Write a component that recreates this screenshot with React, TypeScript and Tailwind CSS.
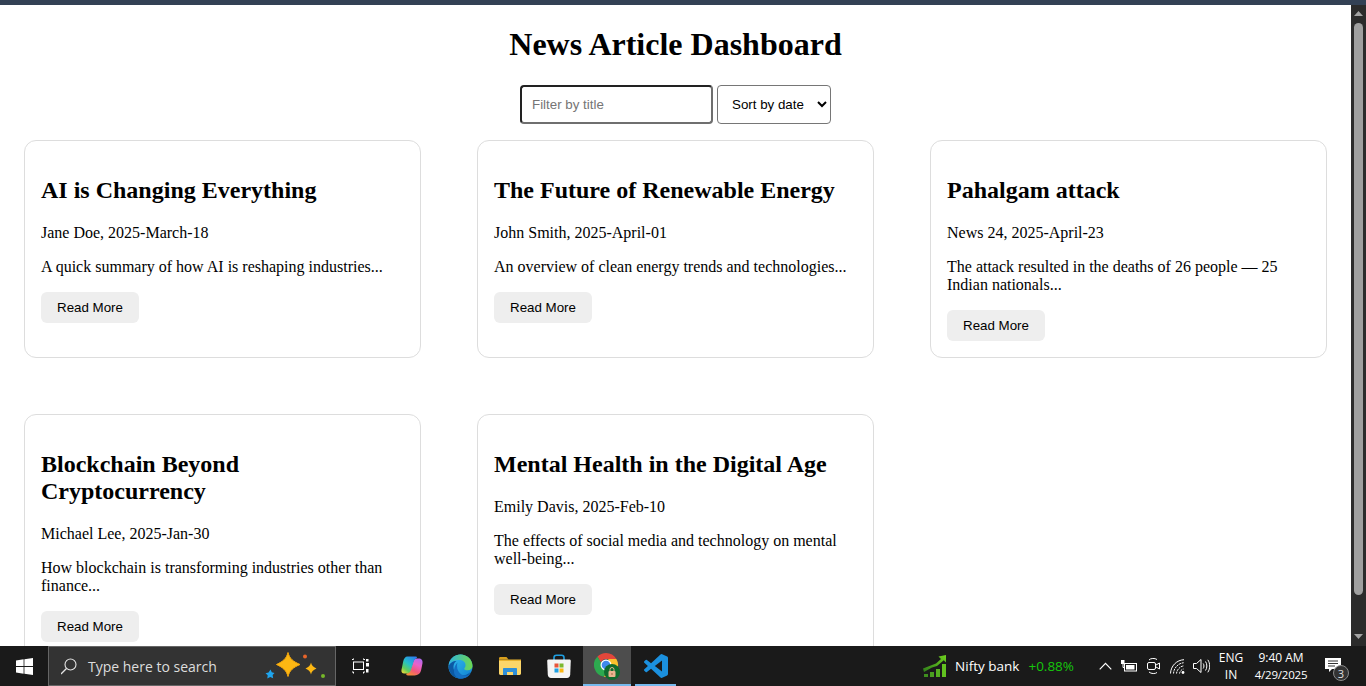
import { ReactNode } from "react";

type Article = { title: string; meta: string; summary: string };

const articles: Article[] = [
  { title: "AI is Changing Everything", meta: "Jane Doe, 2025-March-18", summary: "A quick summary of how AI is reshaping industries..." },
  { title: "The Future of Renewable Energy", meta: "John Smith, 2025-April-01", summary: "An overview of clean energy trends and technologies..." },
  { title: "Pahalgam attack", meta: "News 24, 2025-April-23", summary: "The attack resulted in the deaths of 26 people — 25 Indian nationals..." },
  { title: "Blockchain Beyond Cryptocurrency", meta: "Michael Lee, 2025-Jan-30", summary: "How blockchain is transforming industries other than finance..." },
  { title: "Mental Health in the Digital Age", meta: "Emily Davis, 2025-Feb-10", summary: "The effects of social media and technology on mental well-being..." },
];

function Card({ article }: { article: Article }) {
  return (
    <div className="rounded-xl border border-[#dddddd] bg-white p-4">
      <h2 className="my-[19.92px] text-[24px] font-bold leading-[normal]">{article.title}</h2>
      <p className="my-4 leading-[normal]">{article.meta}</p>
      <p className="my-4 leading-[normal]">{article.summary}</p>
      <button className="block h-[31px] rounded-md bg-[#eeeeee] px-4 font-['Liberation_Sans',sans-serif] text-[13.333px] leading-[normal] text-black">
        Read More
      </button>
    </div>
  );
}

function Scrollbar() {
  return (
    <div className="flex w-[15px] shrink-0 flex-col items-center bg-[#2b2b2b]">
      <svg width="15" height="18" viewBox="0 0 15 18" className="shrink-0">
        <path d="M7.500 6 L3 11 H12 Z" fill="#a3a3a3" />
      </svg>
      <div className="h-[572px] w-[9px] shrink-0 rounded-[5px] bg-[#9f9f9f]" />
      <div className="flex-1" />
      <svg width="15" height="14" viewBox="0 0 15 14" className="shrink-0">
        <path d="M7.500 7 L3 2 H12 Z" fill="#a3a3a3" />
      </svg>
    </div>
  );
}

function WindowsLogo() {
  return (
    <svg width="17" height="17" viewBox="0 0 17 17" fill="#ffffff">
      <path d="M0 2.400 7.600 1.300v6.800H0zM8.400 1.200 17 0v8.100H8.400zM0 8.900h7.600v6.800L0 14.600zM8.400 8.900H17V17l-8.600-1.200z" />
    </svg>
  );
}

function SearchGlyph() {
  return (
    <svg width="17" height="17" viewBox="0 0 17 17" fill="none" stroke="#e4e4e4" strokeWidth="1.100">
      <circle cx="9.500" cy="6.500" r="5.500" />
      <path d="M5.500 10.500 0 16" strokeWidth="1.300" />
    </svg>
  );
}

function Sparkles() {
  return (
    <svg width="62" height="30" viewBox="0 0 62 30">
      <path d="M23 1.500 C24.500 7.500 28 10.500 35 13.500 C28 16.500 24.500 19.500 23 25.500 C21.500 19.500 18 16.500 11.500 13.500 C18 10.500 21.500 7.500 23 1.500Z" fill="#fcb713" stroke="#f9a90b" strokeWidth="1" strokeLinejoin="round" />
      <path d="M46 11.500 C46.700 14.500 48 16 51.500 17.500 C48 19 46.700 20.500 46 23.500 C45.300 20.500 44 19 40.500 17.500 C44 16 45.300 14.500 46 11.500Z" fill="#fcb713" />
      <path d="M5.500 18.500 l1.300 2.800 2.700.6-1.900 2.100.6 3.200-3-1.300-2.900 1.500.4-3.100-2.200-2.100 3-.6z" fill="#1fa5ee" />
      <circle cx="40" cy="5.500" r="2" fill="#e8642a" />
      <circle cx="58" cy="25" r="2" fill="#76b82a" />
    </svg>
  );
}

function TaskView() {
  return (
    <svg width="17" height="16" viewBox="0 0 17 16" fill="none" stroke="#ffffff" strokeWidth="1">
      <rect x="1.500" y="4" width="10" height="7.500" />
      <path d="M0 1.500h1.500v-1M11.500 .5v1H13M0 14h1.500v1.500M11.500 15.500V14H13" />
      <rect x="14" y="1" width="2.500" height="2.500" fill="#ffffff" stroke="none" />
      <rect x="14" y="5" width="3" height="3.500" fill="#ffffff" stroke="none" />
      <rect x="14" y="11" width="2.500" height="3.500" fill="#ffffff" stroke="none" />
    </svg>
  );
}

function CopilotLogo() {
  return (
    <svg width="22" height="20" viewBox="0 0 22 20">
      <defs>
        <linearGradient id="cpA" x1="0.800" y1="0" x2="0.100" y2="1">
          <stop offset="0" stopColor="#2b7ff0" />
          <stop offset="0.45" stopColor="#25c0c8" />
          <stop offset="0.75" stopColor="#62cc5a" />
          <stop offset="1" stopColor="#f2dc3a" />
        </linearGradient>
        <linearGradient id="cpB" x1="0.800" y1="0" x2="0.300" y2="1">
          <stop offset="0" stopColor="#b06af0" />
          <stop offset="0.35" stopColor="#ea62c8" />
          <stop offset="0.7" stopColor="#f0587a" />
          <stop offset="1" stopColor="#f58a3a" />
        </linearGradient>
      </defs>
      <path d="M15.500 2.500h2.300c2.600 0 4.200 2.100 3.700 4.700l-1.300 6.600c-.7 3.600-3.300 5.700-6.500 5.700H7c-1.500 0-2.200-1-1.400-2 1.800-.4 3.200-1.700 3.900-4l2.500-7.500c.6-1.800 1.800-3.500 3.500-3.500Z" fill="url(#cpB)" />
      <path d="M6.500.5h8c1.700 0 2 1 .8 1.800-1.300.8-2.200 2-2.800 3.900l-2.700 8c-.8 2.400-2.400 3.300-4.300 3.300H3.300C1.200 17.500 0 16 .5 13.800l1.700-8.300C2.800 2.500 4.300.5 6.500.5Z" fill="url(#cpA)" />
    </svg>
  );
}

function EdgeLogo() {
  return (
    <svg width="25" height="25" viewBox="0 0 25 25">
      <defs>
        <linearGradient id="edA" x1="0" y1="0" x2="1" y2="1">
          <stop offset="0" stopColor="#35c1f1" />
          <stop offset="1" stopColor="#0f7fd0" />
        </linearGradient>
        <linearGradient id="edB" x1="0" y1="0" x2="1" y2="0">
          <stop offset="0" stopColor="#2fb5dc" />
          <stop offset="1" stopColor="#6ed84f" />
        </linearGradient>
      </defs>
      <circle cx="12.500" cy="12.500" r="12" fill="url(#edA)" />
      <path d="M.6 11C2 4.500 7 .5 12.500.5 19 .5 24.500 5.500 24.500 12c0 2.500-2 4.200-4.800 4.200-2.200 0-3.700-.9-3.500-1.800.8-1 1.300-1.700 1.300-3.200 0-3-2.500-5.200-5.900-5.200C6.500 6 2 7.500.6 11Z" fill="url(#edB)" />
      <path d="M.6 12.500C1.500 9 5 7 8.500 7c-3 2-3.500 5.500-2.500 9 1 3 3.500 5.500 7.500 5.500 3.500 0 6.500-1 9-3.500-2 4-5.500 6.500-10 6.500C6 24.500.5 19 .6 12.500Z" fill="#0c59a4" />
      <path d="M11 24.400c-3.500-1-5.500-4.500-5-8.400.5-3.600 2-6 3.500-7.500-.8 3-.6 6 .8 8.500 1.400 2.500 3.600 4.500 7 4.500 2 0 3.500-.5 5.200-1.800-2 3-6.500 5.500-11.500 4.700Z" fill="#1470c4" />
    </svg>
  );
}

function ExplorerLogo() {
  return (
    <svg width="22" height="18" viewBox="0 0 22 18">
      <path d="M0 1.400C0 .6.600 0 1.400 0h6.100l2 2.500H0Z" fill="#d99f1c" />
      <rect x="0" y="2.500" width="22" height="3" fill="#e9b32f" />
      <path d="M0 4h22v12.600c0 .8-.6 1.400-1.400 1.400H1.400C.6 18 0 17.400 0 16.600Z" fill="#fcd66a" />
      <path d="M4 18v-6c0-.6.400-1 1-1h12c.6 0 1 .4 1 1v6h-4v-3H8v3Z" fill="#2f8fd8" />
    </svg>
  );
}

function StoreLogo() {
  return (
    <svg width="24" height="25" viewBox="0 0 24 25">
      <path d="M7 6V3.500C7 2 8 1.200 9.300 1.200h5.400C16 1.200 17 2 17 3.500V6" fill="none" stroke="#1e9ee0" strokeWidth="1.600" />
      <path d="M1.500 5.500h21c.8 0 1.300.6 1.300 1.300l-.6 14c-.1 2-1.400 3.200-3.200 3.200H4c-1.800 0-3.100-1.200-3.200-3.200L.2 6.800c0-.7.500-1.300 1.300-1.300Z" fill="#f4f4f4" />
      <rect x="7.500" y="9.500" width="4" height="4" fill="#e8553a" />
      <rect x="12.500" y="9.500" width="4" height="4" fill="#7cb82f" />
      <rect x="7.500" y="14.500" width="4" height="4" fill="#1fa0e4" />
      <rect x="12.500" y="14.500" width="4" height="4" fill="#fbb612" />
    </svg>
  );
}

function ChromeLogo() {
  return (
    <svg width="26" height="28" viewBox="0 0 26 28">
      <path d="M12 1a12 12 0 0 1 10.400 6H12a5.500 5.500 0 0 0-5.200 3.700L3.500 4.500A12 12 0 0 1 12 1Z" fill="#e2473b" />
      <path d="M3.500 4.500 8.500 13.200a5 5 0 0 0 4.700 4.800l-3.300 6.800A12 12 0 0 1 3.500 4.500Z" fill="#2da94f" />
      <path d="M22.400 7A12 12 0 0 1 9.900 24.800l5.200-8a5.500 5.500 0 0 0 .4-7.200L14 7Z" fill="#fbc02d" />
      <circle cx="12" cy="13" r="5.500" fill="#ffffff" />
      <circle cx="12" cy="13" r="4.300" fill="#4189ed" />
      <circle cx="18" cy="20" r="8" fill="#0f6b2e" />
      <rect x="14.500" y="19" width="7" height="6" rx="1" fill="#e9b48f" />
      <path d="M16 19v-1.500a2 2 0 0 1 4 0V19" fill="none" stroke="#e9b48f" strokeWidth="1" />
      <rect x="17.500" y="21" width="1" height="2" fill="#a06a48" />
    </svg>
  );
}

function VsCodeLogo() {
  return (
    <svg width="24" height="24" viewBox="0 0 24 24" fill="#1b90de">
      <path d="M23.150 2.587 18.210.21a1.494 1.494 0 0 0-1.705.29l-9.460 8.630-4.120-3.128a.999.999 0 0 0-1.276.057L.327 7.261A1 1 0 0 0 .326 8.740L3.899 12 .326 15.260a1 1 0 0 0 .001 1.479L1.650 17.940a.999.999 0 0 0 1.276.057l4.120-3.128 9.460 8.630a1.492 1.492 0 0 0 1.704.29l4.942-2.377A1.500 1.500 0 0 0 24 20.060V3.939a1.500 1.500 0 0 0-.85-1.352zm-5.146 14.861L10.826 12l7.178-5.448v10.896z" />
    </svg>
  );
}

function NiftyChart() {
  return (
    <svg width="24" height="24" viewBox="0 0 24 24">
      <defs>
        <linearGradient id="nfA" x1="0" y1="1" x2="1" y2="0">
          <stop offset="0" stopColor="#2f7d1a" />
          <stop offset="1" stopColor="#6fd11f" />
        </linearGradient>
      </defs>
      <path d="M0 14.500 9 11l4-1.500 5-4.500-2.500-2.500L23 1v7.500L20.800 6.200 14 12l-5 1.500L1 18Z" fill="url(#nfA)" />
      <rect x="1" y="20" width="4" height="3" fill="#3f8f1e" />
      <rect x="7" y="18" width="4" height="5" fill="#4aa01f" />
      <rect x="13" y="15" width="4" height="8" fill="#55b020" />
      <rect x="19" y="10" width="4" height="13" fill="#62c220" />
    </svg>
  );
}

function Chevron() {
  return (
    <svg width="13" height="8" viewBox="0 0 13 8" fill="none" stroke="#ffffff" strokeWidth="1.200">
      <path d="M.7 7.300 6.500 1.300l5.800 6" />
    </svg>
  );
}

function Battery() {
  return (
    <svg width="16" height="12" viewBox="0 0 16 12" fill="none" stroke="#ffffff">
      <rect x="3.500" y="3.500" width="12" height="7.500" />
      <rect x="5" y="5" width="8.500" height="4.500" fill="#ffffff" stroke="none" />
      <rect x="0" y="0" width="3.500" height="4" fill="#ffffff" stroke="none" />
      <path d="M2 4v3.500h1.500" />
    </svg>
  );
}

function MeetCamera() {
  return (
    <svg width="13" height="18" viewBox="0 0 13 18" fill="none" stroke="#ffffff">
      <path d="M2 3C3.500 1 8 1 10 2.500M2 15c2 2 6.500 2 8 .5" />
      <rect x=".5" y="5.500" width="8" height="7" rx="1.500" />
      <path d="M9 8l3.500-2v6L9 10" />
    </svg>
  );
}

function WifiGlyph() {
  return (
    <svg width="15" height="15" viewBox="0 0 15 15" fill="none" stroke="#ffffff" strokeWidth="1">
      <path d="M.5 14.500C.8 6.800 6.800 1 14 .7" />
      <path d="M3.500 14.500C3.800 8.800 8.500 4 14 3.700" strokeDasharray="2 .8" />
      <path d="M6.500 14.500C6.800 10.800 10 7.200 14 6.800" strokeDasharray="2 .8" />
      <path d="M9.500 14.500C9.800 12.500 11.500 10.300 13.500 10" strokeDasharray="2 .8" />
      <circle cx="13" cy="13.500" r="1.400" fill="#ffffff" stroke="none" />
    </svg>
  );
}

function Volume() {
  return (
    <svg width="17" height="16" viewBox="0 0 17 16" fill="none" stroke="#ffffff" strokeWidth="1">
      <path d="M.5 5.500h3L8 1.500v13l-4.500-4h-3Z" />
      <path d="M10.200 5.500c1 1.500 1 3.500 0 5M12.500 3.500c1.800 2.500 1.800 6.500 0 9M14.800 1.800c2.500 3.500 2.500 9 0 12.500" />
    </svg>
  );
}

function NotificationBadge() {
  return (
    <div className="relative h-[26px] w-[26px]">
      <svg width="16" height="14" viewBox="0 0 16 14" className="absolute left-0 top-[5px]">
        <path d="M0 0h16v11H7l-3 3v-3H0Z" fill="#ffffff" />
        <path d="M3 3h10M3 5.500h10M3 8h7" stroke="#333333" strokeWidth="1" />
      </svg>
      <div className="absolute left-[8px] top-[12px] flex h-[16px] w-[16px] items-center justify-center rounded-full border border-[#8a8a8a] bg-[#333333] text-[11px] leading-none text-[#e0e0e0]">
        3
      </div>
    </div>
  );
}

function TaskIcon({ children, active, running }: { children: ReactNode; active?: boolean; running?: boolean }) {
  return (
    <div className={active ? "relative flex h-10 w-[48px] items-center justify-center bg-[#4d4d4d]" : "relative flex h-10 w-[49px] items-center justify-center"}>
      {children}
      {running ? <div className={active ? "absolute bottom-0 left-0 h-[2px] w-full bg-[#76b9ed]" : "absolute bottom-0 left-[4px] right-[4px] h-[2px] bg-[#76b9ed]"} /> : null}
    </div>
  );
}

function TrayIcon({ children }: { children: ReactNode }) {
  return <div className="flex h-10 w-[24px] items-center justify-center">{children}</div>;
}

function Taskbar() {
  return (
    <div className="flex h-10 shrink-0 items-center bg-[#1a1a1a] font-['Open_Sans',sans-serif] text-white">
      <div className="flex h-10 w-[48px] items-center justify-center">
        <WindowsLogo />
      </div>
      <div className="flex h-10 w-[288px] items-center border border-[#666666] bg-[#333333] pl-[12px] pr-[8px]">
        <SearchGlyph />
        <span className="ml-[10px] text-[14px] text-[#dddddd]">Type here to search</span>
        <div className="flex-1" />
        <Sparkles />
      </div>
      <TaskIcon>
        <TaskView />
      </TaskIcon>
      <div className="w-[2px]" />
      <TaskIcon>
        <CopilotLogo />
      </TaskIcon>
      <TaskIcon>
        <EdgeLogo />
      </TaskIcon>
      <TaskIcon>
        <ExplorerLogo />
      </TaskIcon>
      <TaskIcon>
        <StoreLogo />
      </TaskIcon>
      <TaskIcon active running>
        <ChromeLogo />
      </TaskIcon>
      <TaskIcon running>
        <VsCodeLogo />
      </TaskIcon>
      <div className="flex-1" />
      <div className="flex items-center">
        <NiftyChart />
        <span className="ml-2 text-[13.5px]">Nifty bank</span>
        <span className="ml-[9px] text-[13.5px] text-[#16c60c]">+0.88%</span>
      </div>
      <div className="ml-[19px] flex items-center">
        <TrayIcon>
          <Chevron />
        </TrayIcon>
        <TrayIcon>
          <Battery />
        </TrayIcon>
        <TrayIcon>
          <MeetCamera />
        </TrayIcon>
        <TrayIcon>
          <WifiGlyph />
        </TrayIcon>
        <TrayIcon>
          <Volume />
        </TrayIcon>
      </div>
      <div className="ml-[6px] flex w-[24px] flex-col items-center text-[12px] leading-[17px]">
        <span>ENG</span>
        <span>IN</span>
      </div>
      <div className="ml-[7px] flex w-[62px] flex-col items-center text-[12px] leading-[17px]">
        <span>9:40 AM</span>
        <span className="text-[11.5px] tracking-[-0.2px]">4/29/2025</span>
      </div>
      <div className="ml-[13px] mr-[15px] flex items-center">
        <NotificationBadge />
      </div>
    </div>
  );
}

export default function App() {
  return (
    <div className="flex h-[686px] w-[1366px] flex-col overflow-hidden bg-white font-['Liberation_Serif',serif] text-black">
      <div className="h-[5px] shrink-0 bg-[#334155]" />
      <div className="flex min-h-0 flex-1">
        <main className="min-w-0 flex-1 overflow-hidden px-6">
          <h1 className="my-[21.44px] text-center text-[32px] font-bold leading-[normal]">News Article Dashboard</h1>
          <div className="mb-4 flex justify-center gap-1 font-['Liberation_Sans',sans-serif]">
            <input
              placeholder="Filter by title"
              className="h-[39px] w-[193px] rounded border-2 border-t-[#222222] border-r-[#6f6f6f] border-b-[#6f6f6f] border-l-[#222222] px-[10px] text-[13.333px] placeholder:text-[#757575]"
            />
            <select defaultValue="date" className="h-[39px] w-[114px] rounded border border-[#767676] bg-white px-[10px] text-[13.333px]">
              <option value="date">Sort by date</option>
              <option value="title">Sort by title</option>
            </select>
          </div>
          <div className="grid grid-cols-3 gap-14 text-[16px]">
            {articles.map((article) => (
              <Card key={article.title} article={article} />
            ))}
          </div>
        </main>
        <Scrollbar />
      </div>
      <Taskbar />
    </div>
  );
}
